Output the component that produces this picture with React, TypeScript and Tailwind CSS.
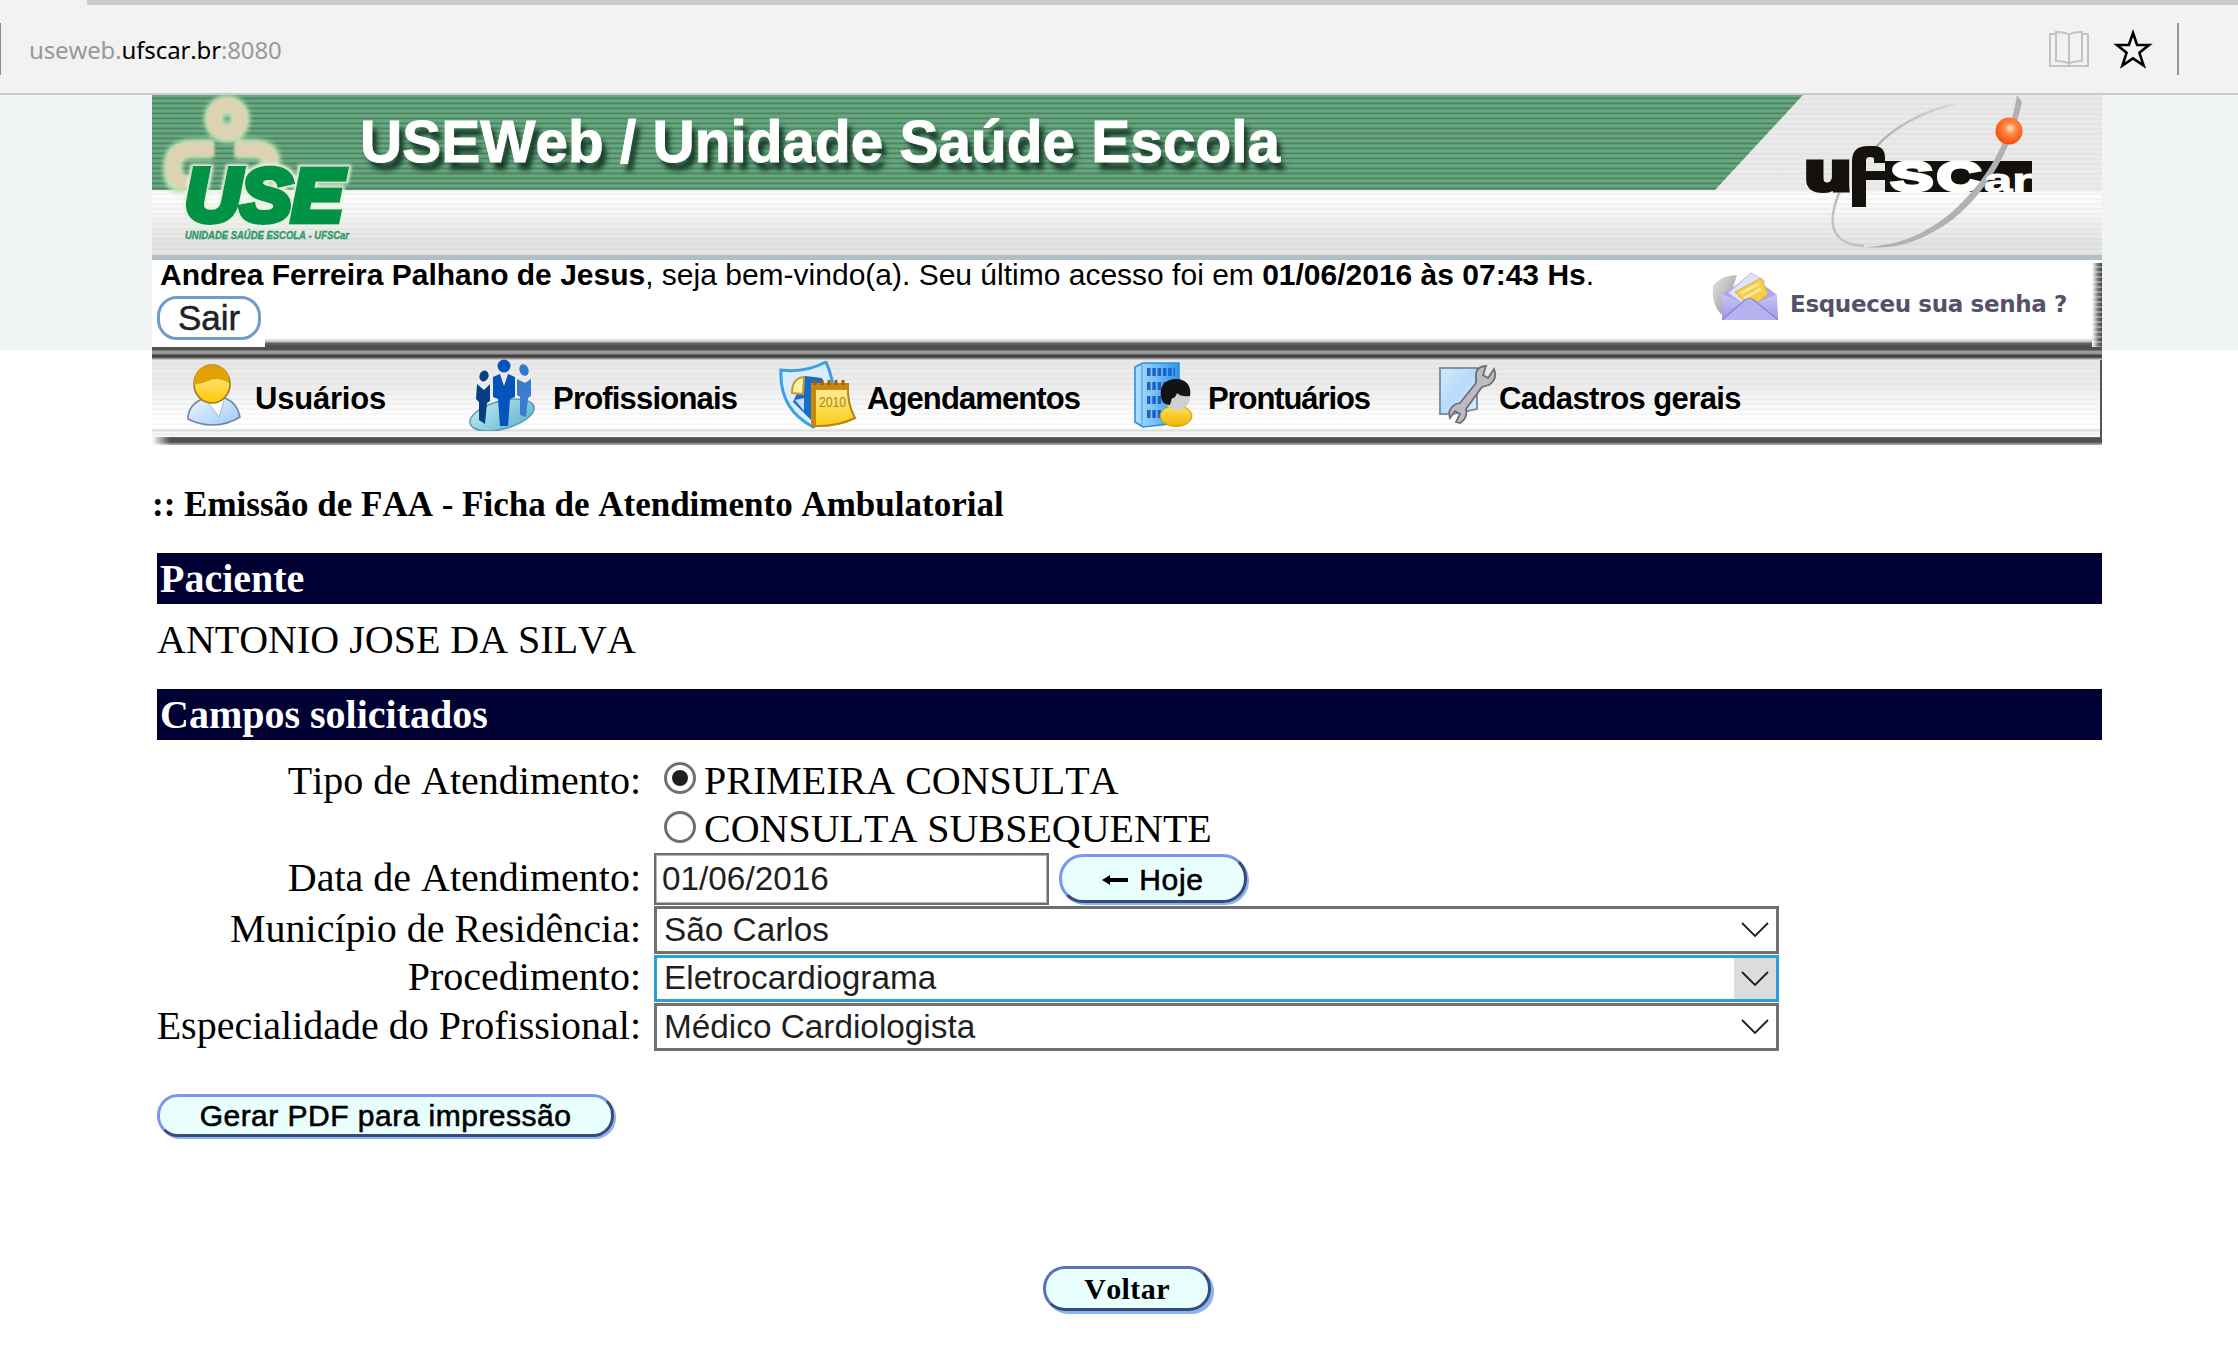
import type { ReactNode } from 'react';

function BookIcon() {
  return (
    <svg width="40" height="38" viewBox="0 0 40 38" fill="none" stroke="#c3c3c3" strokeWidth="2">
      <path d="M6 4H1v32h38V4h-5" />
      <path d="M20 5c-3-3-8-3-13-3v29c5 0 10 0 13 3 3-3 8-3 13-3V2c-5 0-10 0-13 3v29" />
    </svg>
  );
}

function StarIcon() {
  return (
    <svg width="40" height="42" viewBox="0 0 40 42" fill="none" stroke="#000" strokeWidth="2.6" strokeLinejoin="miter">
      <path d="M20 5l4.1 12H36l-9.600 7.800 4.200 12.700L20 30.300 9.400 37.500l4.200-12.700L4 17h11.900z" />
    </svg>
  );
}

function UseLogo() {
  return (
    <svg width="208" height="165" viewBox="0 0 208 165" className="shrink-0 overflow-visible">
      <defs>
        <filter id="glow" x="-20%" y="-20%" width="140%" height="140%">
          <feGaussianBlur stdDeviation="2" />
        </filter>
        <filter id="soft" x="-10%" y="-10%" width="120%" height="120%">
          <feGaussianBlur stdDeviation="0.8" />
        </filter>
        <filter id="halo" x="-10%" y="-20%" width="120%" height="140%">
          <feMorphology in="SourceAlpha" operator="dilate" radius="2" result="fat" />
          <feGaussianBlur in="fat" stdDeviation="1.5" result="blur" />
          <feFlood floodColor="#e4f2de" />
          <feComposite in2="blur" operator="in" result="rim" />
          <feMerge>
            <feMergeNode in="rim" />
            <feMergeNode in="SourceGraphic" />
          </feMerge>
        </filter>
      </defs>
      <g fill="none" stroke="#bfe3b6" strokeWidth="20" filter="url(#glow)">
        <ellipse cx="75" cy="24" rx="13" ry="14" />
        <path d="M61 54H42C24 54 20 62 21 76s6 12 12 12" />
        <path d="M83 54h19c20 0 20 15 10 25l-10 8" />
      </g>
      <g fill="none" stroke="#ddd3b2" strokeWidth="14" filter="url(#soft)">
        <ellipse cx="75" cy="24" rx="13.500" ry="14" />
        <path d="M62 54H42C24 54 20 62 21 74s9 14 18 12" />
        <path d="M83 54h19c20 0 20 15 10 25l-12 8" />
      </g>
      <g fontFamily="'Liberation Sans', Arial, sans-serif" fontWeight="700" fontStyle="italic">
        <text x="33" y="125.500" fontSize="75" textLength="158" lengthAdjust="spacingAndGlyphs" fill="#069345" stroke="#069345" strokeWidth="7" filter="url(#halo)">USE</text>
        <text x="33" y="143.500" fontSize="11.500" textLength="164" lengthAdjust="spacingAndGlyphs" fill="#2f9a68" stroke="#2f9a68" strokeWidth=".4">UNIDADE SAÚDE ESCOLA - UFSCar</text>
      </g>
    </svg>
  );
}

function UfscarLogo() {
  return (
    <svg width="240" height="160" viewBox="0 0 240 160" className="overflow-visible">
      <defs>
        <radialGradient id="ball" cx="55%" cy="40%" r="60%">
          <stop offset="0" stopColor="#ffe3cf" />
          <stop offset=".35" stopColor="#ff8a4a" />
          <stop offset="1" stopColor="#f64c05" />
        </radialGradient>
        <linearGradient id="ring" x1="1" y1="0" x2="0" y2="1">
          <stop offset="0" stopColor="#d8d8d8" />
          <stop offset=".5" stopColor="#a8a8a8" />
          <stop offset="1" stopColor="#c8c8c8" />
        </linearGradient>
      </defs>
      <path d="M154 9C120 17 92 34 76 52M40 96c-13 30-11 53 24 55" fill="none" stroke="url(#ring)" strokeWidth="2.500" />
      <g fontFamily="'Liberation Sans', Arial, sans-serif" fontWeight="700">
        <text x="5" y="95" fontSize="54" textLength="46" lengthAdjust="spacingAndGlyphs" fill="#14110d" stroke="#14110d" strokeWidth="5">u</text>
        <path d="M52 112V66q0-15 16-15h6q11 0 11 12v5H74v-4q0-2-4-2t-4 3v11h20v9H66v27z" fill="#14110d" />
        <rect x="85" y="66" width="147" height="31" fill="#14110d" />
        <text x="91" y="95.500" fontSize="42" textLength="42" lengthAdjust="spacingAndGlyphs" fill="#fff" stroke="#fff" strokeWidth="3.500">S</text>
        <text x="137" y="95.500" fontSize="42" textLength="44" lengthAdjust="spacingAndGlyphs" fill="#fff" stroke="#fff" strokeWidth="3.500">C</text>
      </g>
      <path d="M217 0l5 7c-10 48-36 91-70 118-30 22-58 30-88 27 34-1 60-12 88-35 32-28 58-70 65-117z" fill="#b1b1b1" />
      <text x="184" y="97" fontFamily="'Liberation Sans', Arial, sans-serif" fontWeight="700" fontSize="34" textLength="48" lengthAdjust="spacingAndGlyphs" fill="#fff" stroke="#fff">ar</text>
      <circle cx="209" cy="36" r="13.500" fill="url(#ball)" />
    </svg>
  );
}

function EnvelopeIcon() {
  return (
    <svg width="68" height="50" viewBox="0 0 68 50">
      <defs>
        <linearGradient id="env" x1="0" y1="0" x2="0" y2="1">
          <stop offset="0" stopColor="#c9c6f4" />
          <stop offset="1" stopColor="#9d98e4" />
        </linearGradient>
        <linearGradient id="shade" x1="0" y1="0" x2="1" y2="1">
          <stop offset="0" stopColor="#e6e6e6" />
          <stop offset="1" stopColor="#8c8c8c" />
        </linearGradient>
      </defs>
      <path d="M2 14Q10 3 26 3L12 44Q0 34 2 14z" fill="url(#shade)" />
      <path d="M11 23L39 3l26 19 2 26H11z" fill="#aaa6ea" />
      <path d="M17 21L40 1l14 8-18 25z" fill="#dfe2fd" stroke="#b9bbef" />
      <path d="M24 20l26-14 7 16-17 14z" fill="#f5cf4b" stroke="#e0b331" />
      <path d="M30 21l18-9M33 26l17-9" stroke="#fbe79b" strokeWidth="3" />
      <path d="M11 22l28 12 27-12 1 26H11z" fill="url(#env)" />
      <path d="M11 48l23-20q5-3 9 0l24 20" fill="#b6b2f0" stroke="#8782d2" strokeWidth="1.200" />
    </svg>
  );
}

function UserIcon() {
  return (
    <svg width="54" height="62" viewBox="0 0 54 62">
      <defs>
        <linearGradient id="uface" x1="0" y1="0" x2="0" y2="1">
          <stop offset="0" stopColor="#ffedac" />
          <stop offset="1" stopColor="#ffc800" />
        </linearGradient>
        <linearGradient id="ubody" x1="0" y1="0" x2="1" y2="1">
          <stop offset="0" stopColor="#eef6ff" />
          <stop offset="1" stopColor="#9fcbf8" />
        </linearGradient>
      </defs>
      <path d="M15 35C4 40 1 47 1 55q11 6 25 6t27-8c-2-11-8-16-15-19z" fill="url(#ubody)" stroke="#6f84a0" strokeWidth="1.600" />
      <path d="M20 37l12 16 5-16" fill="#fff" stroke="#9db7d5" />
      <ellipse cx="25" cy="20" rx="18" ry="19" fill="url(#uface)" stroke="#9c7a1c" strokeWidth="1.600" />
      <path d="M7 21C6 8 14 1 25 1s19 8 17 18c-9-5-15-5-21-2S11 19 7 21z" fill="#e2a205" />
    </svg>
  );
}

function PeopleIcon() {
  return (
    <svg width="70" height="72" viewBox="0 0 70 72">
      <defs>
        <linearGradient id="disc" x1="0" y1="0" x2="1" y2="1">
          <stop offset="0" stopColor="#c5eaf4" />
          <stop offset="1" stopColor="#58b4d0" />
        </linearGradient>
      </defs>
      <ellipse cx="34" cy="56" rx="33" ry="14" transform="rotate(-15 34 56)" fill="url(#disc)" stroke="#6397ab" strokeWidth="1.500" />
      <ellipse cx="16" cy="17" rx="4.500" ry="5.500" fill="#073f80" transform="rotate(20 16 17)" />
      <path d="M9 25l7 6 6-6v17l-3 2-2 21-6-4V43l-3-3z" fill="#073f80" />
      <ellipse cx="56" cy="11" rx="4.500" ry="6" fill="#3377cf" transform="rotate(-20 56 11)" />
      <path d="M49 20l8 4 6-4v17l-3 2-2 19-6-2V38l-3-2z" fill="#3c7ccd" />
      <circle cx="36" cy="7" r="6.500" fill="#0653bb" />
      <path d="M25 18l7-3 4 12 4-12 7 3v20l-5 2-2 27h-8l-2-27-5-2z" fill="#0653bb" />
    </svg>
  );
}

function ScheduleIcon() {
  return (
    <svg width="78" height="68" viewBox="0 0 78 68">
      <defs>
        <linearGradient id="cal" x1="0" y1="0" x2="0" y2="1">
          <stop offset="0" stopColor="#fff0a8" />
          <stop offset="1" stopColor="#fbcd12" />
        </linearGradient>
      </defs>
      <path d="M2 9Q26 12 47 1q9 20 7 38-7 21-20 27Q0 48 2 9z" fill="#dcecfb" stroke="#38a0e8" strokeWidth="3" />
      <path d="M26 15l17 2 8 20-8 24h-9L14 41z" fill="#176ec9" />
      <path d="M13 32q0-15 12-16l-1 17z" fill="#fdf0b1" stroke="#c89b25" strokeWidth="2" />
      <path d="M16 39l9-2v13z" fill="#c4dcf8" />
      <path d="M33 24l36-1q-1 20 7 34-18 9-43 8z" fill="url(#cal)" stroke="#b98410" strokeWidth="2" />
      <path d="M32 22h37v7H37v36h-5z" fill="#c8860c" />
      <path d="M36 24v-5m7 5v-5m7 5v-5m7 5v-5m7 5v-5" stroke="#97600a" strokeWidth="3" />
      <text x="40" y="46" fontFamily="'Liberation Sans', Arial, sans-serif" fontSize="14" textLength="27" lengthAdjust="spacingAndGlyphs" fill="#a8892d">2010</text>
    </svg>
  );
}

function RecordsIcon() {
  return (
    <svg width="60" height="66" viewBox="0 0 60 66">
      <defs>
        <linearGradient id="bld" x1="0" y1="0" x2="1" y2="0">
          <stop offset="0" stopColor="#b5e0fb" />
          <stop offset="1" stopColor="#2d95ee" />
        </linearGradient>
        <linearGradient id="shirt" x1="0" y1="0" x2="0" y2="1">
          <stop offset="0" stopColor="#ffe45c" />
          <stop offset="1" stopColor="#f0b400" />
        </linearGradient>
      </defs>
      <path d="M1 5l8-4h36v60l-36 4-8-5z" fill="url(#bld)" stroke="#2691e0" strokeWidth="1.600" />
      <path d="M8 3v60" stroke="#4fb2f5" strokeWidth="1.500" />
      <path d="M13 10h28M13 24h20M13 38h16M13 52h14" stroke="#1a62c4" strokeWidth="8" strokeDasharray="3.500 1.800" />
      <ellipse cx="42" cy="54" rx="16" ry="10.500" fill="url(#shirt)" stroke="#c49b1a" />
      <ellipse cx="43" cy="35" rx="13" ry="13" fill="#cfcfcf" />
      <path d="M27 35c-2-12 5-18 15-18s16 7 14 17q-9 1-13-3-2 6-5 5l-2 7q-8 0-9-8z" fill="#131313" />
    </svg>
  );
}

function SettingsIcon() {
  return (
    <svg width="58" height="60" viewBox="0 0 58 60">
      <defs>
        <linearGradient id="sheet" x1="0" y1="0" x2="1" y2="1">
          <stop offset="0" stopColor="#d4e9fd" />
          <stop offset=".5" stopColor="#b7dbfc" />
          <stop offset="1" stopColor="#e2f1ff" />
        </linearGradient>
      </defs>
      <path d="M1 3h37v41l-24 5H1z" fill="url(#sheet)" stroke="#7d93a9" strokeWidth="2" />
      <path
        d="M37 8q2-7 10-7l-3 9 5 3 6-9q4 10-5 16l-7 2-16 22q2 9-6 14l-4-1 4-8-5-3-5 7q-3-9 6-14l4-1 16-20z"
        fill="#bcbcc0"
        stroke="#6e6e74"
        strokeWidth="1.800"
      />
    </svg>
  );
}

function NavItem({ icon, gap, className, children }: { icon: ReactNode; gap: string; className: string; children: ReactNode }) {
  return (
    <div className={`flex items-center ${gap}`}>
      {icon}
      <span className={`whitespace-nowrap pt-[7px] text-[31px] font-bold leading-[40px] ${className}`}>{children}</span>
    </div>
  );
}

function Radio({ checked, className }: { checked?: boolean; className: string }) {
  return (
    <span className={`flex size-[32px] items-center justify-center rounded-full border-[3px] border-[#707070] bg-white ${className}`}>
      {checked && <span className="size-[16px] rounded-full bg-[#1f1f1f]" />}
    </span>
  );
}

function Select({ active, className, children }: { active?: boolean; className: string; children: ReactNode }) {
  return (
    <div className={`flex w-[1125px] items-center justify-between border-[3px] ${active ? 'border-[#2a9fd9]' : 'border-[#707070]'} ${className}`}>
      <span className="pb-px pl-[7px] font-['Liberation_Sans',Arial,sans-serif] text-[33.330px] leading-[40px] text-[#1f1f1f]">{children}</span>
      <span className={`flex h-full w-[42px] items-center justify-center ${active ? 'bg-[#dcdcdc]' : ''}`}>
        <svg width="28" height="16" viewBox="0 0 28 16" fill="none" stroke="#1f1f1f" strokeWidth="1.800">
          <path d="M1 1l13 13L27 1" />
        </svg>
      </span>
    </div>
  );
}

function Row({ label, className, children }: { label?: string; className: string; children: ReactNode }) {
  return (
    <div className={`flex items-start ${className}`}>
      <span className="flex h-full w-[484px] items-center justify-end whitespace-nowrap">{label}</span>
      <div className="ml-[13px] flex h-full items-start">{children}</div>
    </div>
  );
}

export default function App() {
  return (
    <div className="h-[1352px] w-[2238px] overflow-hidden bg-[linear-gradient(#f1f4f4_350px,#fff_350px)] text-black [font-kerning:none]">
      <div className="h-[95px] border-b-2 border-[#c9c9c9] bg-[#f2f2f2] font-['Noto_Sans',sans-serif]">
        <div className="ml-[87px] h-[5px] bg-[#cbcbcb]" />
        <div className="mt-[18px] flex h-[52px] items-center border-l border-[#8a8a8a]">
          <span className="flex-1 pl-[28px] pt-[2px] text-[24px] leading-[30px] tracking-[-0.130px] text-[#999]">
            useweb.<span className="text-black">ufscar.br</span>:8080
          </span>
          <BookIcon />
          <span className="ml-[24px] flex"><StarIcon /></span>
          <span className="ml-[24px] mr-[59px] h-[52px] w-[2px] bg-[#979797]" />
        </div>
      </div>

      <div className="ml-[152px] w-[1950px] font-['Liberation_Sans',Arial,sans-serif]">
        <div className="relative h-[165px] border-b-[5px] border-[#b0bec5] bg-[repeating-linear-gradient(#00000000_0_3px,#00000007_3px_5px),linear-gradient(#e9e9e9_0,#ebebeb_94px,#fdfdfd_100px,#f4f4f4_120px,#e2e2e2_150px,#e6e6e6_160px)]">
          <div className="h-[95px] bg-[repeating-linear-gradient(#67a880_0,#67a880_1.500px,#4d8562_3.500px,#67a880_5px)] [clip-path:polygon(0_0,1651px_0,1563px_100%,0_100%)]" />
          <div className="absolute inset-0 flex">
            <UseLogo />
            <h1 className="mt-[13px] origin-left scale-x-[.975] whitespace-nowrap text-[60px] font-bold leading-[68px] text-white [-webkit-text-stroke:1px_#fff] [text-shadow:5px_8px_5px_#173a26]">
              USEWeb / Unidade Saúde Escola
            </h1>
          </div>
          <div className="absolute left-[1648px] top-0">
            <UfscarLogo />
          </div>
        </div>

        <div className="flex h-[87px] justify-between bg-white bg-[linear-gradient(#fff_78px,#bbb_82px,#666_83px,#4a4a4a)]">
          <div className="flex flex-col items-start">
            <p className="whitespace-pre pl-[8px] text-[30px] leading-[29px]">
              <b>Andrea Ferreira Palhano de Jesus</b>, seja bem-vindo(a). Seu último acesso foi em <b>01/06/2016 às 07:43 Hs</b>.
            </p>
            <div className="mt-[3px] h-[55px] w-[113px] bg-white pl-[5px] pt-[4px]">
              <button className="block h-[44px] w-[104px] rounded-[20px] border-[3px] border-[#6f9ccd] text-[35px] leading-[36px] text-[#222] [-webkit-text-stroke:0.500px_#222]">Sair</button>
            </div>
          </div>
          <div className="flex">
            <div className="mt-[12px] flex h-[50px] items-start">
              <EnvelopeIcon />
              <span className="ml-[11px] mr-[25px] mt-[18px] whitespace-nowrap font-['DejaVu_Sans',Verdana,sans-serif] text-[23px] font-bold leading-[28px] tracking-[-0.350px] text-[#55516a]">
                Esqueceu sua senha ?
              </span>
            </div>
            <div className="mt-[3px] h-[84px] w-[10px] bg-[repeating-linear-gradient(#ffffff00_0_3px,#ffffff55_3px_5px),linear-gradient(90deg,#fff,#777_60%,#444)]" />
          </div>
        </div>

        <div className="h-[13px] bg-[linear-gradient(#505050_0_3px,#9b9b9b_4px_6px,#909090_7px,#424242_8px_10px,#777_11px,#ddd)]" />
        <nav className="flex h-[77px] items-start border-r-2 border-[#555] bg-[repeating-linear-gradient(#00000000_0_3px,#00000006_3px_5px),linear-gradient(#e8e8e8,#ededed_25px,#fff_60px,#fff_69px,#ddd_70px_71px,#f6f6f6_72px)] pl-[35px]">
          <div className="flex h-[70px] items-center">
            <div className="w-[281px]"><NavItem gap="gap-[14px]" className="tracking-[-0.200px]" icon={<UserIcon />}>Usuários</NavItem></div>
            <div className="w-[311px]"><NavItem gap="gap-[15px]" className="tracking-[-0.800px]" icon={<PeopleIcon />}>Profissionais</NavItem></div>
            <div className="w-[355px]"><NavItem gap="gap-[10px]" className="tracking-[-0.900px]" icon={<ScheduleIcon />}>Agendamentos</NavItem></div>
            <div className="w-[304px]"><NavItem gap="gap-[14px]" className="tracking-[-1.100px]" icon={<RecordsIcon />}>Prontuários</NavItem></div>
            <div className="pl-px"><NavItem gap="gap-[2px]" className="tracking-[-0.600px]" icon={<SettingsIcon />}>Cadastros gerais</NavItem></div>
          </div>
        </nav>
        <div className="h-[8px] bg-[linear-gradient(90deg,#fff,#ffffff00_18px),linear-gradient(#777_0,#505050_1px_5px,#999_7px,#bbb)]" />
      </div>

      <main className="ml-[152px] w-[1950px] bg-white font-['Liberation_Serif','Times_New_Roman',serif] text-[40px] leading-[46px]">
        <h2 className="pt-[40px] text-[35px] font-bold leading-[40px]">:: Emissão de FAA - Ficha de Atendimento Ambulatorial</h2>
        <div className="ml-[5px] mt-[28px]">
          <div className="h-[51px] bg-[#000033] pl-[3px] font-bold leading-[51px] text-white">Paciente</div>
          <div className="h-[85px] pt-[13px]">ANTONIO JOSE DA SILVA</div>
          <div className="h-[51px] bg-[#000033] pl-[3px] font-bold leading-[51px] text-white">Campos solicitados</div>

          <div className="pt-[16px]">
            <Row label="Tipo de Atendimento:" className="h-[49px]">
              <div className="flex h-full items-center pl-[10px]"><Radio checked className="mb-[6px] mr-[8px]" />PRIMEIRA CONSULTA</div>
            </Row>
            <Row className="h-[48px]">
              <div className="flex h-full items-center pl-[10px]"><Radio className="mb-[5px] mr-[8px]" />CONSULTA SUBSEQUENTE</div>
            </Row>
            <Row label="Data de Atendimento:" className="h-[53px] [&>span]:pb-[4px]">
              <div className="flex h-[52px] w-[395px] items-center border-2 border-[#6e6e6e] pb-px pl-[6px] font-['Liberation_Sans',Arial,sans-serif] text-[33.330px] text-[#1f1f1f] shadow-[inset_0_0_0_1px_#b5b5b5]">
                01/06/2016
              </div>
              <button className="ml-[10px] mt-px flex h-[49px] w-[188px] items-center justify-center gap-[11px] rounded-[24px] border-[3px] border-b-[#3c4a7a] border-l-[#7b95f2] border-r-[#3c4a7a] border-t-[#7b95f2] bg-[#e8fffe] pt-[2px] font-['Liberation_Sans',Arial,sans-serif] text-[30px] leading-none tracking-[0.700px] shadow-[2px_2px_0_#86b6ec] [-webkit-text-stroke:0.600px_#000]">
                <svg width="26" height="10" viewBox="0 0 26 10"><path d="M0 5l8-5v3h18v4H8v3z" fill="#000" /></svg>
                Hoje
              </button>
            </Row>
            <Row label="Município de Residência:" className="h-[49px] [&>span]:pb-[4px]"><Select className="h-[48px]">São Carlos</Select></Row>
            <Row label="Procedimento:" className="h-[48px] [&>span]:pb-[4px]"><Select active className="h-[47px]">Eletrocardiograma</Select></Row>
            <Row label="Especialidade do Profissional:" className="h-[48px] [&>span]:pb-[3px]"><Select className="h-[48px]">Médico Cardiologista</Select></Row>
          </div>

          <button className="mt-[43px] flex h-[43px] w-[457px] items-center justify-center rounded-[21px] border-[3px] border-b-[#3c4a7a] border-l-[#7b95f2] border-r-[#3c4a7a] border-t-[#7b95f2] bg-[#e8fffe] font-['Liberation_Sans',Arial,sans-serif] text-[30px] leading-none tracking-[0.480px] shadow-[2px_2px_0_#86b6ec] [-webkit-text-stroke:0.600px_#000]">
            Gerar PDF para impressão
          </button>
        </div>
        <button className="mx-auto mt-[129px] flex h-[45px] w-[168px] items-center justify-center rounded-[22px] border-[3px] border-b-[#3c4a7a] border-l-[#5a70ba] border-r-[#3c4a7a] border-t-[#5a70ba] bg-[#e8fffe] text-[30px] font-bold leading-none tracking-[0.400px] shadow-[3px_3px_0_#86b6ec]">
          Voltar
        </button>
      </main>
    </div>
  );
}
